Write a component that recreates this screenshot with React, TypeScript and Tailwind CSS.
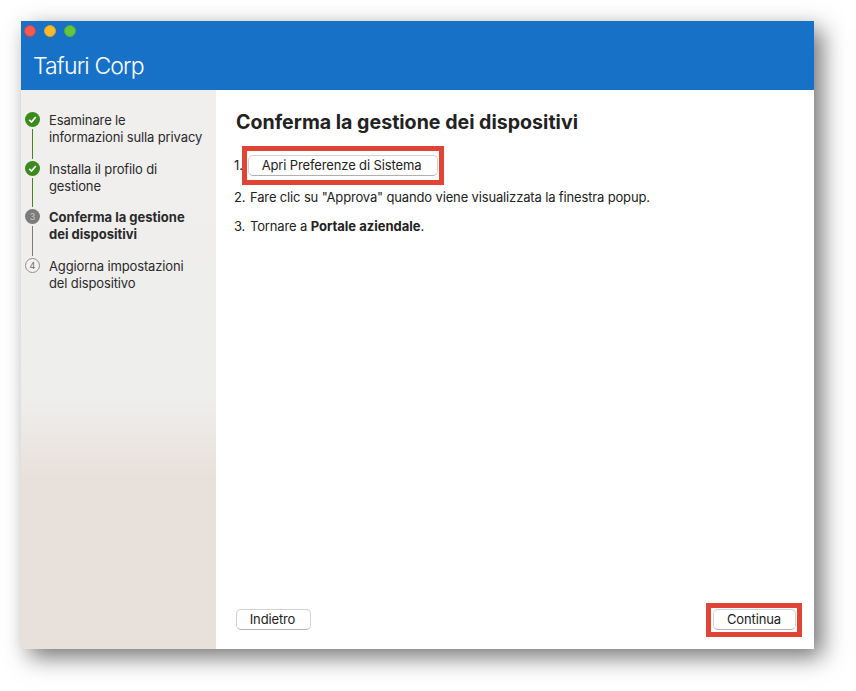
import React from 'react';

const FONT = "font-['Inter','Liberation_Sans',sans-serif]";

const STEPS = [
  { label: ['Esaminare le', 'informazioni sulla privacy'], state: 'done' },
  { label: ['Installa il profilo di', 'gestione'], state: 'done' },
  { label: ['Conferma la gestione', 'dei dispositivi'], state: 'current', n: 3 },
  { label: ['Aggiorna impostazioni', 'del dispositivo'], state: 'todo', n: 4 },
];

function StepIcon({ state, n }: { state: string; n?: number }) {
  if (state === 'done') {
    return (
      <div className="w-[15px] h-[15px] rounded-full bg-[#3a8a1e] flex items-center justify-center flex-shrink-0">
        <svg width="9" height="9" viewBox="0 0 9 9" fill="none">
          <path d="M1.2 4.8 L3.5 7 L7.8 2" stroke="#fff" strokeWidth="1.7" />
        </svg>
      </div>
    );
  }
  if (state === 'current') {
    return (
      <div className="w-[15px] h-[15px] rounded-full bg-[#7b7b7b] flex items-center justify-center text-[9px] leading-none text-[#c9c9c9] flex-shrink-0">
        {n}
      </div>
    );
  }
  return (
    <div className="w-[15px] h-[15px] rounded-full border border-[#8f8f8f] bg-[#f3f2f1] flex items-center justify-center text-[9px] leading-none text-[#6b6b6b] flex-shrink-0">
      {n}
    </div>
  );
}

function Button({ children, w }: { children: React.ReactNode; w: string }) {
  return (
    <button className={`${w} h-[21px] bg-white rounded-[5px] border border-[#d2d2d2] border-b-[#b0b0b0] flex items-center justify-center text-[13px] tracking-[-0.13px] leading-none text-[#222] flex-shrink-0`}>
      {children}
    </button>
  );
}

export default function App() {
  return (
    <div className={`w-[856px] h-[691px] bg-white pt-[21px] pl-[21px] overflow-hidden ${FONT}`}>
      <div className="w-[793px] h-[628px] flex flex-col shadow-[8px_8px_22px_rgba(0,0,0,0.55)]">

        {/* Barra titolo */}
        <div className="h-[69px] bg-[#1772c7] flex flex-col flex-shrink-0">
          <div className="flex gap-[8px] pl-[3px] pt-[4px]">
            <div className="w-[12px] h-[12px] rounded-full bg-[#f25a55] border border-[#d8433f]"></div>
            <div className="w-[12px] h-[12px] rounded-full bg-[#fbbb2e] border border-[#e2a325]"></div>
            <div className="w-[12px] h-[12px] rounded-full bg-[#62c63f] border border-[#52ae33]"></div>
          </div>
          <div className="pl-[12px] pt-[13px] text-[23px] leading-[32px] font-light tracking-[-0.85px] text-white">
            Tafuri Corp
          </div>
        </div>

        <div className="flex-1 flex min-h-0">

          {/* Passaggi */}
          <div className="w-[195px] bg-[linear-gradient(180deg,#f0efee_0%,#eeeeed_55%,#e8e0da_70%,#e8e0da_100%)] pt-[22px] pl-[4px] flex flex-col flex-shrink-0">
            {STEPS.map((step, i) => (
              <div key={i} className="h-[48.7px] flex">
                <div className="w-[15px] flex flex-col items-center flex-shrink-0">
                  <StepIcon state={step.state} n={step.n} />
                  {i < 3 && (
                    <div className={`w-px flex-1 mt-[2px] mb-[2px] ${step.state === 'done' ? 'bg-[#3a8a1e]' : 'bg-[#7b7b7b]'}`}></div>
                  )}
                </div>
                <div className={`pl-[9px] text-[13px] leading-[17px] text-[#2a2a2a] ${step.state === 'current' ? 'font-bold tracking-[0px]' : 'tracking-[-0.13px]'}`}>
                  {step.label[0]}<br />{step.label[1]}
                </div>
              </div>
            ))}
          </div>

          {/* Contenuto */}
          <div className="flex-1 bg-white flex flex-col pl-[18px] pr-[12px] pb-[12px] min-w-0">
            <h1 className="pl-[2px] pt-[20px] text-[19.6px] leading-[25px] font-bold text-[#222]">
              Conferma la gestione dei dispositivi
            </h1>
            <div className="mt-[11px] flex items-center text-[13px] text-[#222]">
              <span className="w-[8px]">1.</span>
              <div className="border-[5px] border-[#df4434] w-[202px] h-[39px] flex items-center justify-center">
                <Button w="w-[190px] pr-[3px]">Apri Preferenze di Sistema</Button>
              </div>
            </div>
            <div className="mt-[4px] flex text-[13px] leading-[17px] tracking-[-0.15px] text-[#222]">
              <span className="w-[16px]">2.</span>
              <span>Fare clic su "Approva" quando viene visualizzata la finestra popup.</span>
            </div>
            <div className="mt-[12px] flex text-[13px] leading-[17px] tracking-[-0.15px] text-[#222]">
              <span className="w-[16px]">3.</span>
              <span>Tornare a <b className="tracking-[0px]">Portale aziendale</b>.</span>
            </div>

            <div className="mt-auto flex items-end justify-between">
              <div className="pl-[2px] pb-[7px]">
                <Button w="w-[75px] pr-[2px]">Indietro</Button>
              </div>
              <div className="border-[5px] border-[#df4434] w-[96px] h-[34px] flex items-start justify-center pt-[1px]">
                <Button w="w-[83px]">Continua</Button>
              </div>
            </div>
          </div>
        </div>
      </div>
    </div>
  );
}
